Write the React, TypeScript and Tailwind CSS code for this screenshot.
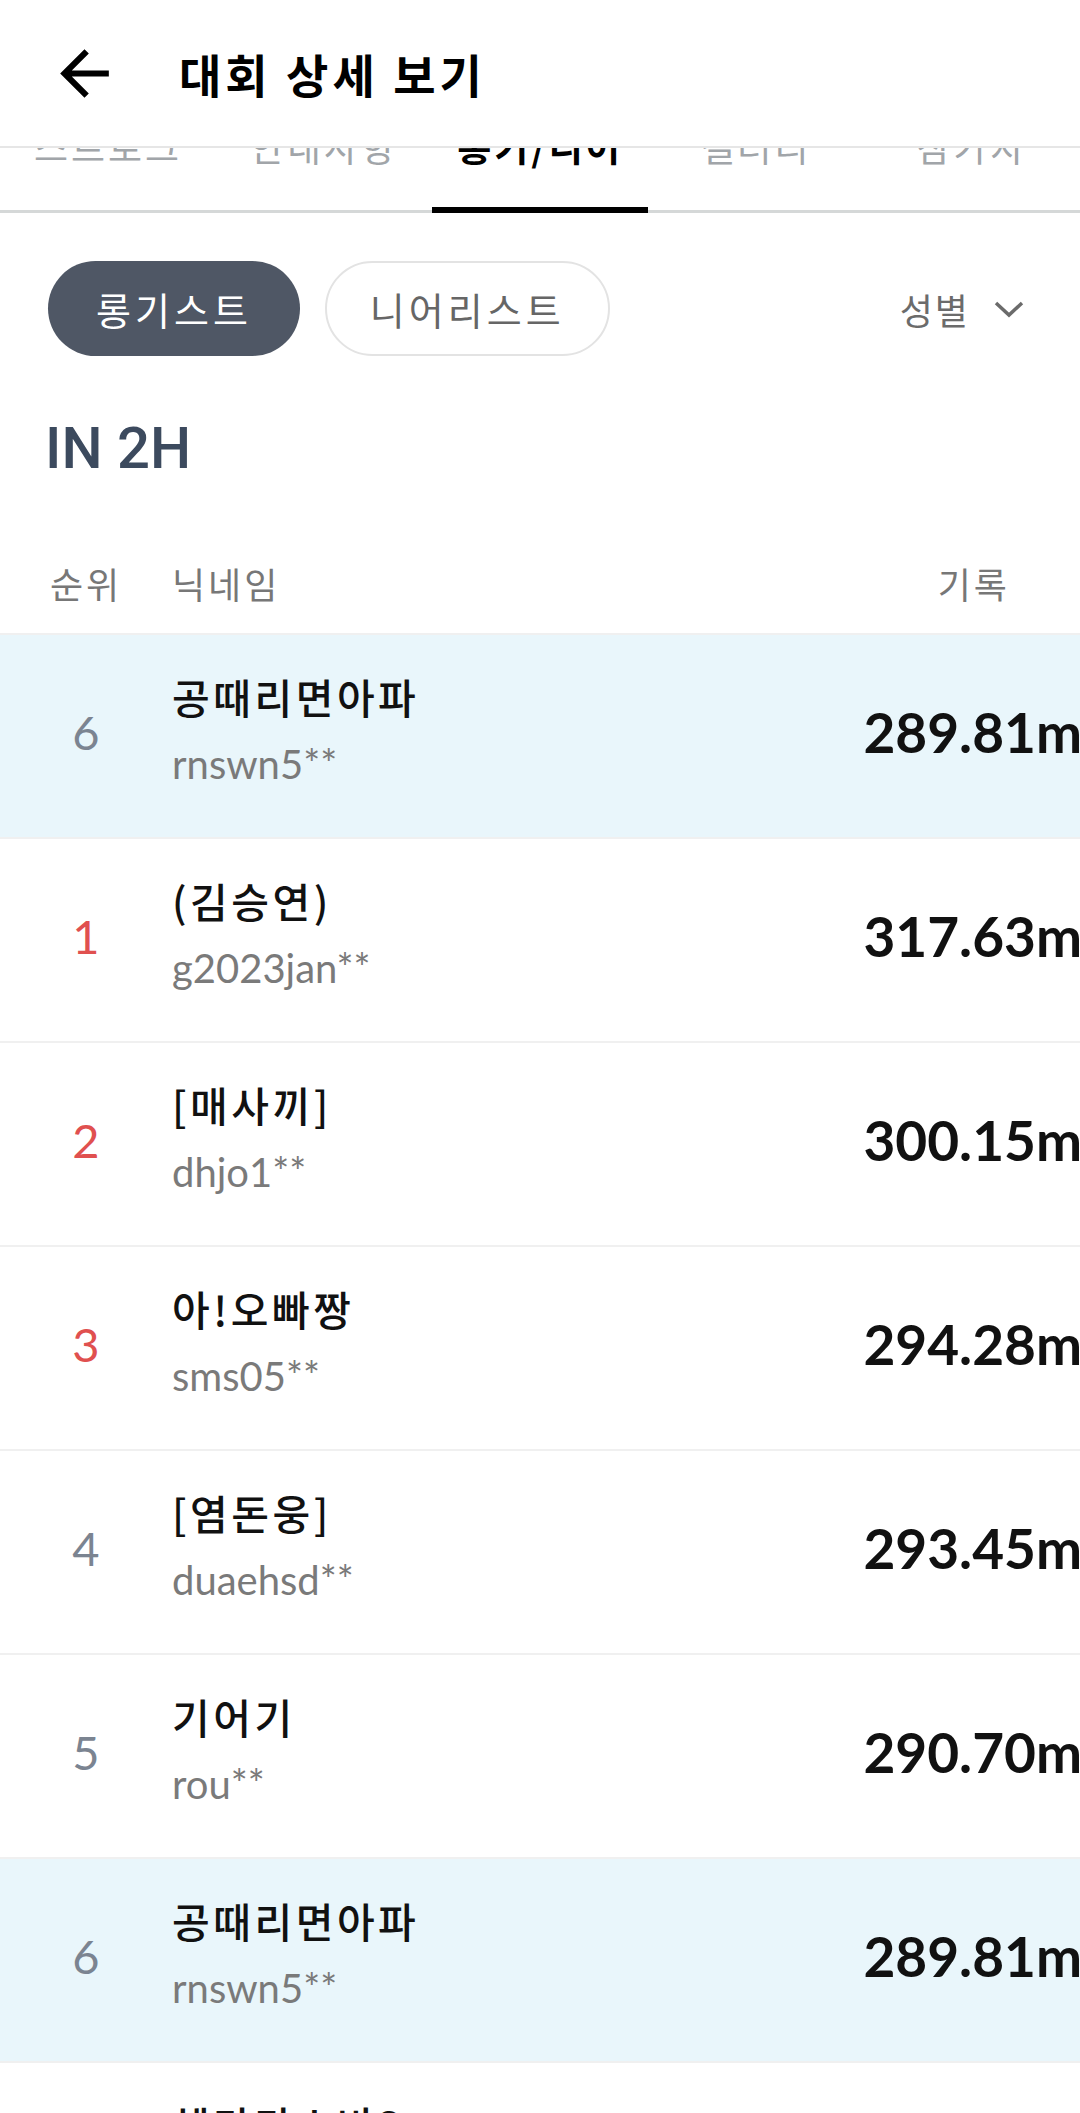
const tabs = ['스트로크', '안내사항', '롱기/니어', '갤러리', '참가자'];

interface RankRow {
  rank: number;
  name: string;
  id: string;
  record: string;
  mine?: boolean;
}

const rows: RankRow[] = [
  { rank: 6, name: '공때리면아파', id: 'rnswn5**', record: '289.81m', mine: true },
  { rank: 1, name: '(김승연)', id: 'g2023jan**', record: '317.63m' },
  { rank: 2, name: '[매사끼]', id: 'dhjo1**', record: '300.15m' },
  { rank: 3, name: '아!오빠짱', id: 'sms05**', record: '294.28m' },
  { rank: 4, name: '[염돈웅]', id: 'duaehsd**', record: '293.45m' },
  { rank: 5, name: '기어기', id: 'rou**', record: '290.70m' },
  { rank: 6, name: '공때리면아파', id: 'rnswn5**', record: '289.81m', mine: true },
  { rank: 7, name: '헤라다스바3', id: 'hera3**', record: '288.02m' },
];

const BackArrow = () => (
  <svg width="73" height="73" viewBox="0 0 24 24" className="shrink-0">
    <path d="M20 11H7.83l5.59-5.59L12 4l-8 8 8 8 1.41-1.41L7.83 13H20v-2z" fill="#000" />
  </svg>
);

const Chevron = () => (
  <svg width="30" height="18" viewBox="0 0 30 18" fill="none">
    <path d="M2 3 L15 15 L28 3" stroke="#6b6b6b" strokeWidth="3.5" />
  </svg>
);

const Row = ({ row }: { row: RankRow }) => (
  <div
    className={`flex h-[204px] items-center border-b-2 border-[#f0f0f0] ${row.mine ? 'bg-[#e9f6fb]' : 'bg-white'}`}
  >
    <div
      className={`-mt-[8px] w-[172px] shrink-0 text-center font-['Lato',sans-serif] text-[47px] leading-[56px] ${
        row.rank <= 3 ? 'text-[#e0504f]' : 'text-[#7b8491]'
      }`}
    >
      {row.rank}
    </div>
    <div className="-mt-[14px] flex flex-1 flex-col">
      <div className="text-[41px] font-medium leading-[48px] tracking-[3.5px] text-[#111]">{row.name}</div>
      <div className="mt-[22px] font-['Lato',sans-serif] text-[40px] leading-[45px] text-[#7a7a7a]">{row.id}</div>
    </div>
    <div className="-mr-[2px] -mt-[8px] font-['Lato',sans-serif] text-[55px] font-bold leading-[64px] text-[#111]">
      {row.record}
    </div>
  </div>
);

export default function App() {
  return (
    <div className="min-h-screen w-full overflow-hidden bg-white font-['Noto_Sans_CJK_KR',sans-serif]">
      <header className="relative z-10 flex h-[148px] items-center border-b-2 border-[#e6e6e6] bg-white pl-[48px]">
        <BackArrow />
        <h1 className="ml-[58px] text-[46px] font-bold leading-[56px] tracking-[4px] text-black">대회 상세 보기</h1>
      </header>

      <nav className="flex h-[65px] overflow-hidden">
        {tabs.map((t, i) => (
          <div key={t} className="flex flex-1 flex-col">
            <div
              className={`-mt-[20px] h-[79px] text-center text-[37px] leading-[36px] tracking-[3px] ${
                i === 2 ? 'font-bold text-black' : 'text-[#a1a5a9]'
              }`}
            >
              {t}
            </div>
            {i === 2 ? (
              <div className="h-[6px] bg-black" />
            ) : (
              <div className="flex h-[6px] flex-col justify-end">
                <div className="h-[3px] bg-[#d5d8d8]" />
              </div>
            )}
          </div>
        ))}
      </nav>

      <div className="mt-[48px] flex items-center px-[48px]">
        <button className="h-[95px] rounded-full bg-[#4f5765] px-[48px] text-[38px] tracking-[4px] text-white">
          롱기스트
        </button>
        <button className="ml-[25px] h-[95px] rounded-full border-2 border-[#e3e3e3] px-[43px] text-[38px] tracking-[4px] text-[#666]">
          니어리스트
        </button>
        <div className="ml-auto mr-[8px] flex items-center gap-[24px] text-[36px] tracking-[2px] text-[#6b6b6b]">
          <span>성별</span>
          <Chevron />
        </div>
      </div>

      <h2 className="mt-[63px] px-[45px] font-['Roboto',sans-serif] text-[58px] font-medium leading-[58px] text-[#3c4a5e]">
        IN 2H
      </h2>

      <div className="mt-[56px] flex h-[102px] items-center border-b-2 border-[#f0f0f0] text-[36px] tracking-[3px] text-[#777]">
        <div className="w-[172px] shrink-0 text-center">순위</div>
        <div className="flex-1">닉네임</div>
        <div className="pr-[70px]">기록</div>
      </div>

      {rows.map((r, i) => (
        <Row key={i} row={r} />
      ))}
    </div>
  );
}
